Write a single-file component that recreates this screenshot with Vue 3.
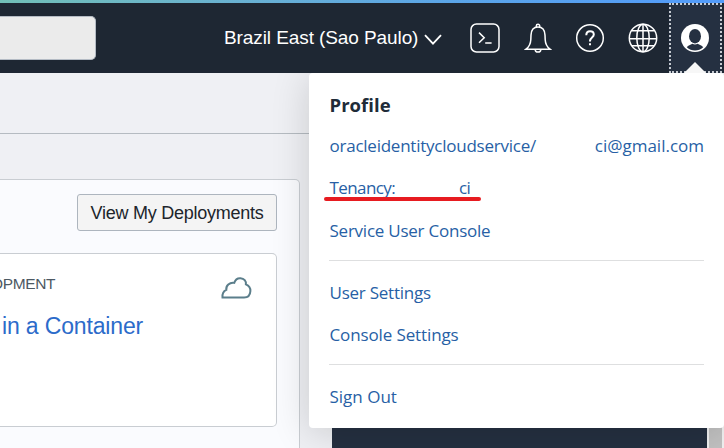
<script setup>
const accountLinks = [
  { id: 'user', label: 'oracleidentitycloudservice/', tail: 'ci@gmail.com' },
  { id: 'tenancy', label: 'Tenancy:', tail: 'ci' },
  { id: 'service', label: 'Service User Console' },
]
const settingLinks = [
  { id: 'usersettings', label: 'User Settings' },
  { id: 'consolesettings', label: 'Console Settings' },
]
</script>

<template>
  <div class="page">
    <div class="stripe"></div>
    <header class="topbar">
      <div class="search"></div>
      <div class="tools">
        <button class="region">
          <span>Brazil East (Sao Paulo)</span>
          <svg width="18" height="12" viewBox="0 0 18 12"><path d="M1 1.2 9 9.6 17 1.2" /></svg>
        </button>
        <button class="tool shell">
          <svg width="30" height="30" viewBox="0 0 30 30">
            <rect x="1" y="1" width="28" height="28" rx="5.5" />
            <path d="M9 9.600l5.200 5.100L9 19.800M15.200 20h6.400" />
          </svg>
        </button>
        <button class="tool bell">
          <svg width="28" height="30" viewBox="0 0 28 30">
            <path d="M2 26.200c3.400-2.700 4.600-5.400 4.800-9.500l.2-4.600C7.200 7.200 9.600 4 14 4s6.800 3.200 7 8.100l.2 4.600c.2 4.100 1.400 6.800 4.800 9.500z" />
            <path d="M12.300 4.100V3a1.700 1.700 0 0 1 3.400 0v1.100M11.200 26.500a2.800 2.600 0 0 0 5.600 0" />
          </svg>
        </button>
        <button class="tool help">
          <svg width="30" height="30" viewBox="0 0 30 30">
            <circle cx="15" cy="15" r="13.300" />
            <path d="M11.300 12.200c0-2.500 1.500-4 3.800-4 2.200 0 3.700 1.300 3.700 3.300 0 3-3.800 3-3.800 6.500v.5" class="mark" />
            <path d="M15 20.300v2" class="mark" />
          </svg>
        </button>
        <button class="tool globe">
          <svg width="30" height="30" viewBox="0 0 30 30">
            <circle cx="15" cy="15" r="13.700" />
            <ellipse cx="15" cy="15" rx="6.200" ry="13.700" />
            <path d="M15 1.300v27.400M1.300 15.700h27.400M4 7.700h22M4 22.700h22" />
          </svg>
        </button>
        <button class="profile">
          <svg width="28" height="28" viewBox="0 0 28 28">
            <circle cx="14" cy="14" r="14" fill="#fff" />
            <ellipse cx="14" cy="12.200" rx="6" ry="7.200" fill="#253041" />
            <path d="M5.800 23.200c1.400-1.900 3.600-2.300 5.600-3.500 1.500.9 3.700.9 5.200 0 2 1.200 4.200 1.600 5.600 3.500-4.700 4.400-11.700 4.400-16.400 0z" fill="#253041" />
          </svg>
          <i class="notch"></i>
        </button>
      </div>
    </header>

    <main class="content">
      <div class="toolbar-space"></div>
      <div class="columns">
        <section class="board">
          <div class="board-head"><button class="deployments">View My Deployments</button></div>
          <article class="card">
            <div class="card-head">
              <span class="category">OPMENT</span>
              <svg class="cloud" width="32" height="24" viewBox="0 0 32 24">
                <path d="M2.500 21.500c-.3-3.700 1.200-6.500 3.800-7.600C5.700 9.700 9.600 6 14.300 6.800 15.300 3.600 17.600 2 20.500 2.200c3.600.2 5.900 3 5.400 6.200 3 1.200 4.600 3.500 4.500 6.600-.2 3.900-2.500 6.500-6.300 6.500z" />
              </svg>
            </div>
            <a class="card-title">in a Container</a>
          </article>
        </section>
        <aside class="promo"></aside>
        <div class="scrollbar"><div class="thumb"></div></div>
      </div>
    </main>

    <nav class="menu">
      <h2>Profile</h2>
      <a v-for="link in accountLinks" :key="link.id" :class="['link', link.id]">
        <span>{{ link.label }}</span><span v-if="link.tail" class="tail">{{ link.tail }}</span>
      </a>
      <hr />
      <a v-for="link in settingLinks" :key="link.id" :class="['link', link.id]"><span>{{ link.label }}</span></a>
      <hr />
      <a class="link signout"><span>Sign Out</span></a>
    </nav>
  </div>
</template>

<style>
body { margin: 0; overflow: hidden; }
</style>

<style scoped>
* { box-sizing: border-box; }
.page { position: relative; width: 724px; height: 448px; overflow: hidden; display: flex; flex-direction: column; background: #eff0f4; font-family: "Liberation Sans", Arial, sans-serif; }
button { border: 0; padding: 0; background: none; color: inherit; font: inherit; }
svg { display: block; fill: none; stroke: #fff; stroke-width: 1.5; }
.stripe { height: 3px; flex: none; background: linear-gradient(90deg, #72bfb7 0, #69b1d2 240px, #5ba5e8 450px, #529bfb 724px); }
.topbar { height: 70px; flex: none; display: flex; justify-content: space-between; background: #1e2733; color: #fff; }
.search { width: 96px; height: 44px; margin-top: 13px; background: #ebebeb; border: 1px solid #b4bbc4; border-left: 0; border-radius: 0 5px 5px 0; }
.tools { display: flex; align-items: center; }
.region { display: flex; align-items: center; gap: 6px; font-size: 19px; letter-spacing: -.09px; white-space: nowrap; margin-right: 28px; }
.region span { width: 194px; text-align: left; }
.region svg { stroke-width: 1.8; margin-top: 3px; }
.tool { display: flex; }
.shell { margin-right: 24px; }
.bell { margin-right: 23px; }
.help { margin-right: 23px; }
.globe { margin-right: 11px; }
.mark { stroke-width: 2; }
.profile { position: relative; width: 53px; height: 70px; margin-right: 2px; padding-right: 1px; display: flex; align-items: center; justify-content: center; background: #253041; border: 2px dotted #c5cad1; }
.profile svg { stroke: none; }
.notch { position: absolute; bottom: -2px; left: 13px; width: 22px; height: 11px; background: #f7f7f7; clip-path: polygon(50% 0, 100% 100%, 0 100%); }
.content { flex: 1; display: flex; flex-direction: column; }
.toolbar-space { height: 61px; flex: none; border-bottom: 1px solid #b5bbc1; }
.columns { flex: 1; display: flex; padding-top: 45px; }
.board { width: 300px; height: 290px; flex: none; padding-right: 22px; background: #fafbfe; border: 1px solid #c9cdd2; border-left: 0; border-radius: 0 5px 0 0; }
.board-head { display: flex; justify-content: flex-end; padding-top: 14px; }
.deployments { width: 200px; height: 37px; border: 1px solid #adb5be; border-radius: 3px; background: #f4f4f4; color: #20252b; font-size: 18px; letter-spacing: -.25px; padding-top: 1px; white-space: nowrap; }
.card { height: 174px; margin-top: 22px; border: 1px solid #c9cdd2; border-left: 0; border-radius: 0 5px 5px 0; background: #fff; }
.card-head { display: flex; justify-content: space-between; align-items: flex-start; padding: 22px 24px 0 0; }
.category { margin-top: -1px; margin-left: -9px; color: #4d5963; font-size: 15.500px; letter-spacing: -.35px; line-height: 18px; }
.cloud { stroke: #5b7e8b; stroke-width: 2; }
.card-title { display: block; margin: 13px 0 0 2px; color: #2c6bca; font-size: 23px; letter-spacing: -.15px; line-height: 26px; white-space: nowrap; }
.promo { width: 375px; height: 290px; margin-left: 32px; flex: none; background: #253041; }
.scrollbar { width: 17px; flex: none; padding: 0 2px; background: #f1f1f1; }
.thumb { height: 290px; background: #c1c1c1; }
.menu { position: absolute; left: 309px; top: 73px; width: 415px; height: 355px; padding: 19px 20px 0 20.500px; background: #fff; border-radius: 4px; box-shadow: 0 4px 38px rgba(0, 0, 0, .16); font-family: "Open Sans", "Noto Sans", sans-serif; clip-path: inset(0 -60px -60px -60px); }
h2 { margin: 0; color: #202b38; font-size: 18.500px; line-height: 25px; font-weight: 700; letter-spacing: .05px; }
.link { display: flex; height: 24px; margin-bottom: 18.300px; line-height: 24px; font-size: 17px; color: #275fa5; white-space: nowrap; letter-spacing: -.24px; }
h2 + .link { margin-top: 17px; }
.user { justify-content: space-between; }
.user .tail { letter-spacing: 0; }
.tenancy { position: relative; letter-spacing: -.6px; }
.tenancy .tail { margin-left: 64px; }
.tenancy::after { content: ""; position: absolute; left: -5.500px; top: 21px; width: 157px; height: 4px; border-radius: 2px; background: #e71b20; }
.consolesettings { letter-spacing: -.12px; }
.signout { letter-spacing: 0; }
hr { height: 1px; margin: -1px 0 20px -.5px; border: 0; background: #dedfe0; }
.consolesettings { margin-bottom: 18px; }
</style>
